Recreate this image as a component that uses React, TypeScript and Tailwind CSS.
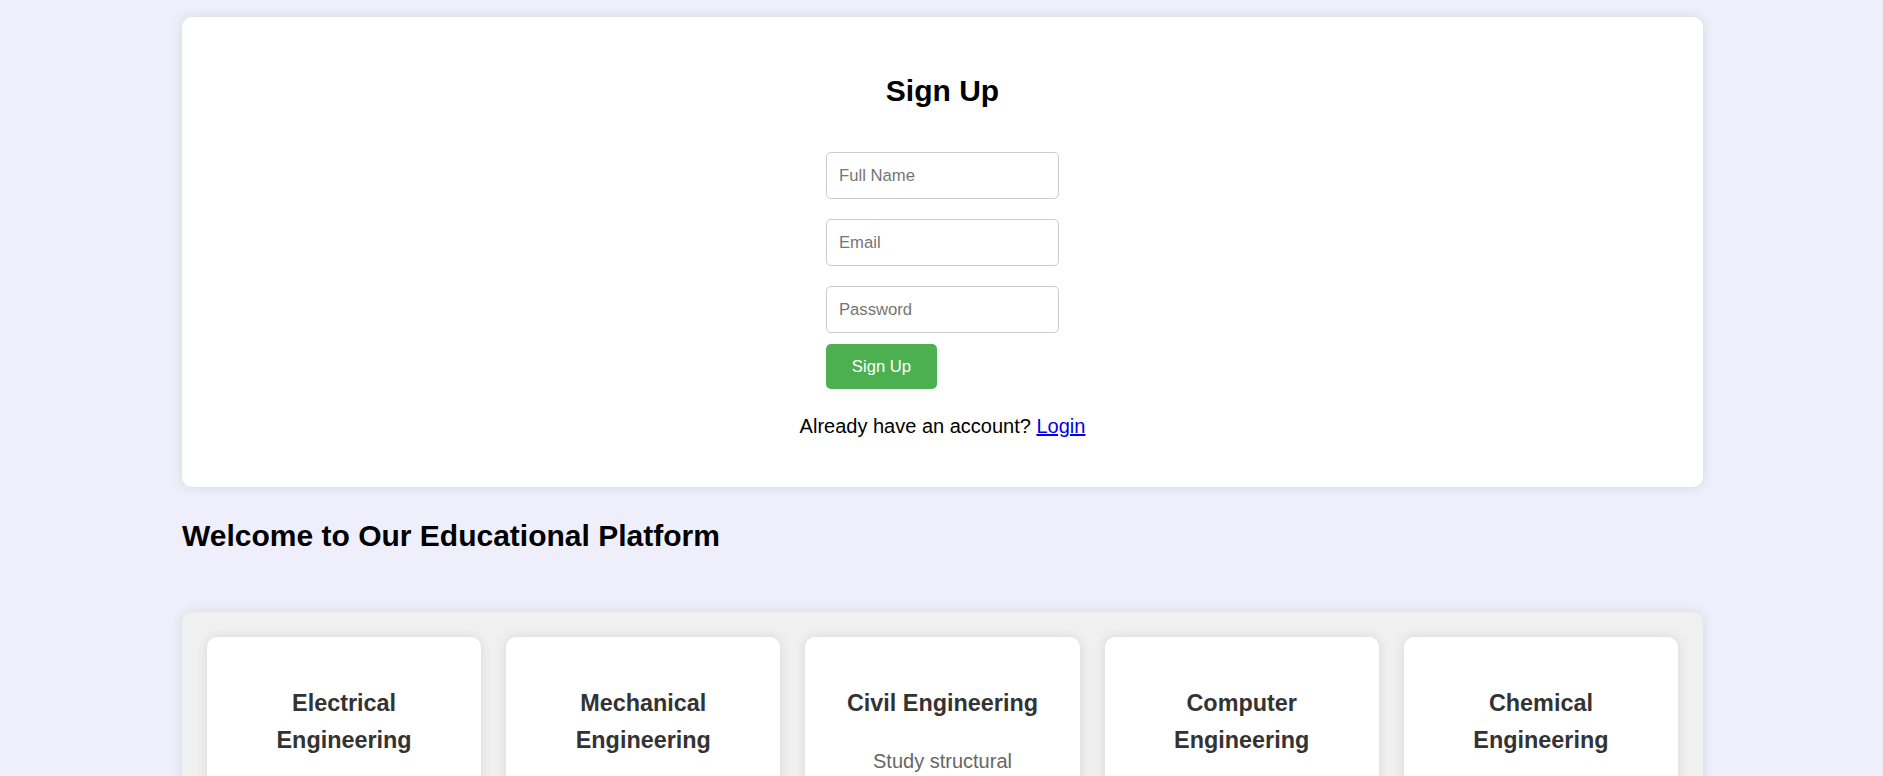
import { useState } from "react";

const courses = [
  {
    title: "Electrical Engineering",
    desc: "Learn about circuits, electronics, power systems and signal processing.",
  },
  {
    title: "Mechanical Engineering",
    desc: "Explore thermodynamics, mechanics, machine design and manufacturing.",
  },
  {
    title: "Civil Engineering",
    desc: "Study structural engineering, construction management and transportation.",
  },
  {
    title: "Computer Engineering",
    desc: "Dive into hardware, software, networks and embedded systems.",
  },
  {
    title: "Chemical Engineering",
    desc: "Understand chemical processes, materials and process control.",
  },
];

const SignUpCard = () => {
  const [name, setName] = useState("");
  const [email, setEmail] = useState("");
  const [password, setPassword] = useState("");

  return (
    <div className="bg-white rounded-[10px] shadow-[0_0_12px_rgba(0,0,0,0.1)] pt-[50px] pb-[45px] flex flex-col items-center">
      <h2 className="text-[30px] leading-[48px] font-bold text-black">Sign Up</h2>
      <form
        className="mt-[37px] flex flex-col items-start"
        onSubmit={(e) => e.preventDefault()}
      >
        <input
          type="text"
          placeholder="Full Name"
          value={name}
          onChange={(e) => setName(e.target.value)}
          className="w-[233px] h-[47px] border border-[#cccccc] rounded-[5px] px-[12px] text-[16.67px] placeholder:text-[#757575] outline-none"
        />
        <input
          type="email"
          placeholder="Email"
          value={email}
          onChange={(e) => setEmail(e.target.value)}
          className="mt-[20px] w-[233px] h-[47px] border border-[#cccccc] rounded-[5px] px-[12px] text-[16.67px] placeholder:text-[#757575] outline-none"
        />
        <input
          type="password"
          placeholder="Password"
          value={password}
          onChange={(e) => setPassword(e.target.value)}
          className="mt-[20px] w-[233px] h-[47px] border border-[#cccccc] rounded-[5px] px-[12px] text-[16.67px] placeholder:text-[#757575] outline-none"
        />
        <button
          type="submit"
          className="mt-[11px] w-[111px] h-[45px] bg-[#4CAF50] text-white text-[16.67px] rounded-[5px]"
        >
          Sign Up
        </button>
      </form>
      <p className="mt-[21px] text-[20px] leading-[32px] text-black">
        Already have an account?{" "}
        <a href="#" className="text-[#0000EE] underline">
          Login
        </a>
      </p>
    </div>
  );
};

const CourseCard = ({ title, desc }: { title: string; desc: string }) => (
  <div className="bg-white rounded-[10px] shadow-[0_0_12px_rgba(0,0,0,0.1)] px-[25px] pt-[48px] pb-[48px] text-center">
    <h3 className="text-[23.4px] leading-[37.4px] font-bold text-[#333333]">{title}</h3>
    <p className="mt-[23px] text-[20px] leading-[32px] text-[#666666]">{desc}</p>
  </div>
);

export default function App() {
  return (
    <div
      className="min-h-screen bg-[#efeffc] pt-[17px] pb-[40px]"
      style={{ fontFamily: '"Liberation Sans", Arial, sans-serif' }}
    >
      <div className="w-[1521px] ml-[182px]">
        <SignUpCard />

        <h2 className="mt-[25px] text-[30px] leading-[48px] font-bold text-black">
          Welcome to Our Educational Platform
        </h2>

        <div className="mt-[52px] bg-[#f0f0f0] rounded-[10px] shadow-[0_0_12px_rgba(0,0,0,0.1)] p-[25px] grid grid-cols-5 gap-[25px]">
          {courses.map((c) => (
            <CourseCard key={c.title} title={c.title} desc={c.desc} />
          ))}
        </div>
      </div>
    </div>
  );
}
